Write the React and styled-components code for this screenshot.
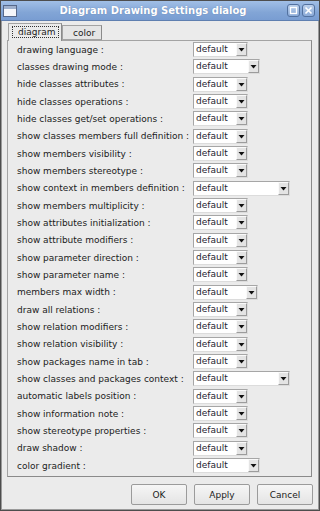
import React from 'react';
import styled, { createGlobalStyle } from 'styled-components';

const settings = [
  ['drawing language :', 55],
  ['classes drawing mode :', 67],
  ['hide classes attributes :', 55],
  ['hide classes operations :', 55],
  ['hide classes get/set operations :', 55],
  ['show classes members full definition :', 55],
  ['show members visibility :', 55],
  ['show members stereotype :', 55],
  ['show context in members definition :', 97],
  ['show members multiplicity :', 55],
  ['show attributes initialization :', 55],
  ['show attribute modifiers :', 55],
  ['show parameter direction :', 55],
  ['show parameter name :', 55],
  ['members max width :', 65],
  ['draw all relations :', 55],
  ['show relation modifiers :', 55],
  ['show relation visibility :', 55],
  ['show packages name in tab :', 55],
  ['show classes and packages context :', 97],
  ['automatic labels position :', 55],
  ['show information note :', 55],
  ['show stereotype properties :', 55],
  ['draw shadow :', 55],
  ['color gradient :', 67],
];

const App = () => {
  return (
    <>
      <GlobalStyle />
      <Window>
        <TitleBar>
          <WinIcon>
            <svg width="14" height="12" viewBox="0 0 14 12">
              <rect x="0.5" y="0.5" width="13" height="11" fill="#f4f6fa" stroke="#56688a" />
              <rect x="1" y="1" width="12" height="3" fill="#9fb0cc" />
            </svg>
          </WinIcon>
          <Title>Diagram Drawing Settings dialog</Title>
          <TitleButtons>
            <TitleButton>
              <svg width="9" height="9" viewBox="0 0 9 9">
                <rect x="1.5" y="1.5" width="6" height="6" fill="none" stroke="#fff" strokeWidth="1.3" />
              </svg>
            </TitleButton>
            <TitleButton>
              <svg width="9" height="9" viewBox="0 0 9 9">
                <path d="M1.5 1.5 L7.5 7.5 M7.5 1.5 L1.5 7.5" stroke="#fff" strokeWidth="1.6" />
              </svg>
            </TitleButton>
          </TitleButtons>
        </TitleBar>

        <Body>
          <TabBar>
            <Tab active>
              <FocusRing>diagram</FocusRing>
            </Tab>
            <Tab>color</Tab>
          </TabBar>

          <Panel>
            {settings.map(([label, width]) => (
              <Row key={label}>
                <Label>{label}</Label>
                <Combo width={width}>
                  <ComboText>default</ComboText>
                  <ComboArrow>
                    <svg width="7" height="5" viewBox="0 0 7 5">
                      <path d="M0.5 1 H6.5 L3.5 4.5 Z" fill="#111" />
                    </svg>
                  </ComboArrow>
                </Combo>
              </Row>
            ))}
          </Panel>

          <ButtonRow>
            <Button>OK</Button>
            <Button>Apply</Button>
            <Button>Cancel</Button>
          </ButtonRow>
        </Body>
      </Window>
    </>
  );
};

const GlobalStyle = createGlobalStyle`
  html, body {
    margin: 0;
    padding: 0;
    background: #ebebeb;
  }
  body {
    font-family: "DejaVu Sans", "Liberation Sans", sans-serif;
    font-size: 9px;
    color: #1b1b1b;
  }
`;

const Window = styled.div`
  width: 320px;
  height: 511px;
  box-sizing: border-box;
  border: 1px solid #4d4d4d;
  box-shadow: inset 1px 0 #9a9a9a, inset -1px 0 #9a9a9a, inset 0 -1px #9a9a9a;
  background: #ebebeb;
  display: flex;
  flex-direction: column;
`;

const TitleBar = styled.div`
  height: 19px;
  display: flex;
  align-items: center;
  padding: 0 4px 0 2px;
  background: linear-gradient(#a1bfe6, #82a5d6 60%, #799dd2);
  border-bottom: 1px solid #5f7fb0;
`;

const WinIcon = styled.div`
  width: 14px;
  height: 12px;
  display: flex;
`;

const Title = styled.div`
  flex: 1;
  text-align: center;
  color: #fff;
  font-weight: bold;
  font-size: 10px;
  text-shadow: 0 0 1px rgba(40, 60, 100, 0.4);
  padding-left: 2px;
`;

const TitleButtons = styled.div`
  display: flex;
  gap: 2px;
`;

const TitleButton = styled.div`
  width: 13px;
  height: 13px;
  box-sizing: border-box;
  border: 1px solid #52719f;
  border-radius: 3px;
  background: linear-gradient(rgba(255, 255, 255, 0.35), rgba(255, 255, 255, 0.1));
  display: flex;
  align-items: center;
  justify-content: center;
`;

const Body = styled.div`
  flex: 1;
  display: flex;
  flex-direction: column;
  padding: 2px 7px 0 6px;
`;

const TabBar = styled.div`
  display: flex;
  align-items: flex-end;
  height: 17px;
  padding-left: 1px;
  position: relative;
  z-index: 1;
`;

const Tab = styled.div`
  box-sizing: border-box;
  height: ${p => (p.active ? '18px' : '15px')};
  margin-bottom: ${p => (p.active ? '-1px' : '0')};
  padding: ${p => (p.active ? '2px 2px 0 3px' : '0 9px 0 10px')};
  display: flex;
  align-items: ${p => (p.active ? 'flex-start' : 'center')};
  background: ${p => (p.active ? '#ebebeb' : '#e5e5e5')};
  border: 1px solid #a3a3a3;
  border-bottom: ${p => (p.active ? 'none' : '1px solid #a3a3a3')};
  border-right-color: #8a8a8a;
  width: ${p => (p.active ? '54px' : '40px')};
`;

const FocusRing = styled.span`
  display: block;
  width: 48px;
  height: 12px;
  box-sizing: border-box;
  border: 1px dotted #333;
  padding-left: 5px;
  line-height: 11px;
`;

const Panel = styled.div`
  box-sizing: border-box;
  height: 437px;
  border: 1px solid #a3a3a3;
  border-right-color: #8a8a8a;
  border-bottom-color: #8a8a8a;
  padding: 0 0 0 9px;
  display: grid;
  grid-auto-rows: 17.33px;
  align-content: start;
`;

const Row = styled.div`
  display: grid;
  grid-template-columns: 176px auto;
  align-items: center;
`;

const Label = styled.span`
  white-space: nowrap;
`;

const Combo = styled.div`
  width: ${p => p.width}px;
  height: 15px;
  box-sizing: border-box;
  display: flex;
  background: #fff;
  border: 1px solid;
  border-color: #a6a6a6 #dcdcdc #dcdcdc #a6a6a6;
`;

const ComboText = styled.span`
  flex: 1;
  padding-left: 2px;
  line-height: 13px;
  color: #1e2430;
`;

const ComboArrow = styled.span`
  width: 11px;
  box-sizing: border-box;
  background: #e4e4e4;
  border: 1px solid;
  border-color: #fafafa #9c9c9c #9c9c9c #fafafa;
  display: flex;
  align-items: center;
  justify-content: center;
`;

const ButtonRow = styled.div`
  display: flex;
  justify-content: flex-end;
  gap: 7px;
  padding-top: 7px;
  margin-right: -1px;
`;

const Button = styled.button`
  width: 56px;
  height: 21px;
  font-family: "DejaVu Sans", "Liberation Sans", sans-serif;
  font-size: 9px;
  color: #1b1b1b;
  background: linear-gradient(#f6f6f6, #e4e4e4);
  border: 1px solid #9b9b9b;
  border-radius: 2px;
  padding: 0;
`;

export default App;
